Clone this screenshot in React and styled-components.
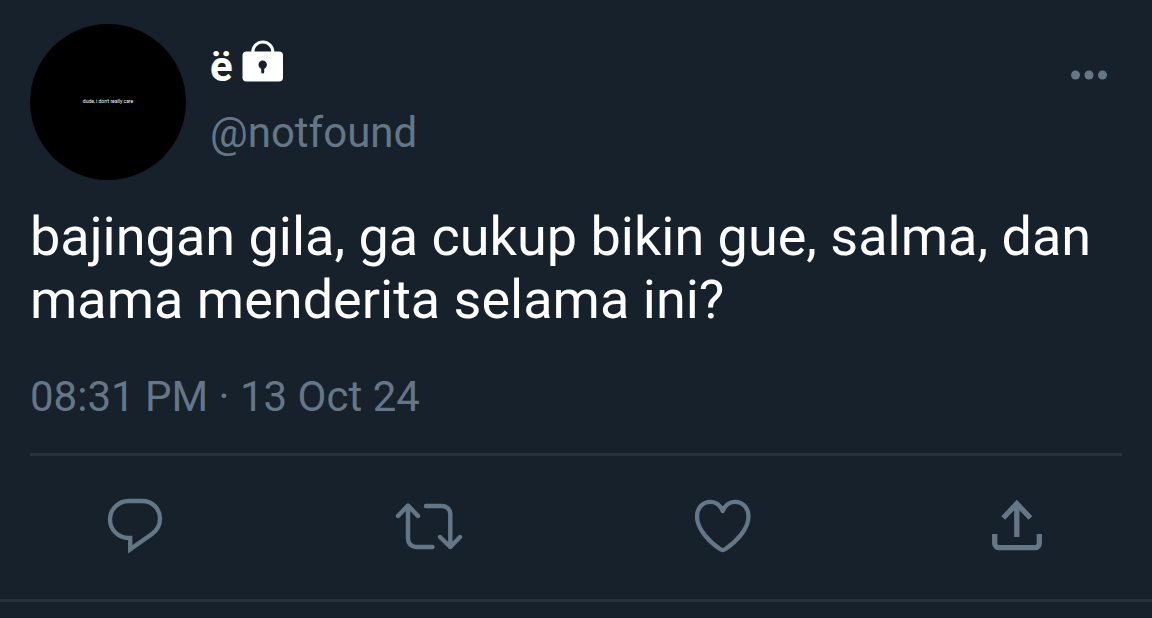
import React from "react";
import styled, { createGlobalStyle } from "styled-components";

const App = () => {
  return (
    <>
      <GlobalStyle />
      <Tweet>
        <Header>
          <Avatar>dude, i don't really care</Avatar>
          <Names>
            <DisplayName>
              <span>ë</span>
              <LockIcon />
            </DisplayName>
            <Handle href="#">@notfound</Handle>
          </Names>
          <MoreButton type="button" aria-label="More">
            <svg width="36" height="10" viewBox="0 0 36 10" fill="currentColor">
              <circle cx="4.5" cy="5" r="4.5" />
              <circle cx="18" cy="5" r="4.5" />
              <circle cx="31.5" cy="5" r="4.5" />
            </svg>
          </MoreButton>
        </Header>
        <Message>
          bajingan gila, ga cukup bikin gue, salma, dan mama menderita selama
          ini?
        </Message>
        <Time>08:31 PM · 13 Oct 24</Time>
        <Actions>
          <ActionButton type="button" aria-label="Reply">
            <Icon width="60" height="60" viewBox="0 0 60 60" strokeWidth="4.3">
              <path d="M25.2 42H23.5A18.5 18.5 0 0 1 23.5 5H37.5A17.5 17.5 0 0 1 55 22.5C55 29 52.5 34 47 38L25.2 53.3Z" />
            </Icon>
          </ActionButton>
          <ActionButton type="button" aria-label="Retweet">
            <Icon width="70" height="60" viewBox="0 -2 70 60" strokeWidth="4.4" $round>
              <path d="M4 18L14 7.5L24 18M14 8V41A8 8 0 0 0 22 49H38.5" />
              <path d="M32 8H48A8 8 0 0 1 56.3 16V49M46 39L56.3 49L66 39" />
            </Icon>
          </ActionButton>
          <ActionButton type="button" aria-label="Like">
            <Icon width="60" height="60" viewBox="0 -2 60 60" strokeWidth="4.3" $round>
              <path d="M29.7 13C27 7 23 3.9 17.7 3.9C9.5 3.9 4 10 4 18.5C4 31.5 17 44.5 27 51Q29.7 53 32.4 51C42.4 44.5 55.5 31.5 55.5 18.5C55.5 10 50 3.9 41.8 3.9C36.5 3.9 32.4 7 29.7 13Z" />
            </Icon>
          </ActionButton>
          <ActionButton type="button" aria-label="Share">
            <Icon width="54" height="60" viewBox="0 -2 54 60" strokeWidth="5.3">
              <path d="M13.2 20L26.8 5.7L40.4 20M26.8 6V39" />
              <path d="M4.7 36V45A4.5 4.5 0 0 0 9.2 49.7H44.8A4.5 4.5 0 0 0 49.3 45V36" />
            </Icon>
          </ActionButton>
        </Actions>
      </Tweet>
    </>
  );
};

export default App;

const LockIcon = () => (
  <svg width="42" height="42" viewBox="0 0 42 42" role="img" aria-label="Protected">
    <path
      d="M10.8 13V12A10 10 0 0 1 30.8 12V13"
      fill="none"
      stroke="#fff"
      strokeWidth="3"
    />
    <rect x="0.5" y="11.5" width="40.5" height="30" rx="4" fill="#fff" />
    <circle cx="20.7" cy="24.7" r="4.2" fill="#17212b" />
    <path d="M20.7 26V32" stroke="#17212b" strokeWidth="3" strokeLinecap="round" />
  </svg>
);

const GlobalStyle = createGlobalStyle`
  * {
    box-sizing: border-box;
  }

  body {
    margin: 0;
    background: #17212b;
    color: #fff;
    font-family: Roboto, "Liberation Sans", sans-serif;
  }
`;

const Tweet = styled.article`
  padding: 24px 30px 0;
  border-bottom: 3px solid #28323d;
`;

const Header = styled.header`
  display: flex;
  align-items: flex-start;
  gap: 24px;
`;

const Avatar = styled.div`
  display: flex;
  flex-shrink: 0;
  align-items: center;
  justify-content: center;
  width: 156px;
  height: 156px;
  padding-bottom: 2px;
  border-radius: 50%;
  background: #000;
  font-size: 5px;
  white-space: nowrap;
`;

const Names = styled.div`
  flex: 1;
  padding-top: 16px;
`;

const DisplayName = styled.div`
  display: flex;
  align-items: flex-start;
  gap: 9px;
  height: 44px;
  font-size: 42px;
  font-weight: 700;
  line-height: 54px;
`;

const Handle = styled.a`
  display: block;
  margin-top: 24px;
  color: #657786;
  font-size: 42px;
  line-height: 50px;
  text-decoration: none;
`;

const MoreButton = styled.button`
  display: flex;
  margin: 36px 5px 0 0;
  padding: 10px;
  border: 0;
  background: none;
  color: #657786;
  cursor: pointer;
`;

const Message = styled.p`
  margin: 25px 0 0;
  font-size: 54px;
  line-height: 63px;
`;

const Time = styled.time`
  display: block;
  margin-top: 41px;
  padding-bottom: 31px;
  border-bottom: 3px solid #28323d;
  color: #657786;
  font-size: 42px;
  line-height: 50px;
`;

const Actions = styled.div`
  display: flex;
  justify-content: space-between;
  padding: 40px 70px 43px;
`;

const ActionButton = styled.button`
  display: flex;
  align-items: center;
  justify-content: center;
  width: 70px;
  height: 60px;
  padding: 0;
  border: 0;
  background: none;
  color: #657786;
  cursor: pointer;
`;

const Icon = styled.svg`
  fill: none;
  stroke: currentColor;
  stroke-linecap: ${({ $round }) => ($round ? "round" : "butt")};
  stroke-linejoin: ${({ $round }) => ($round ? "round" : "miter")};
`;
